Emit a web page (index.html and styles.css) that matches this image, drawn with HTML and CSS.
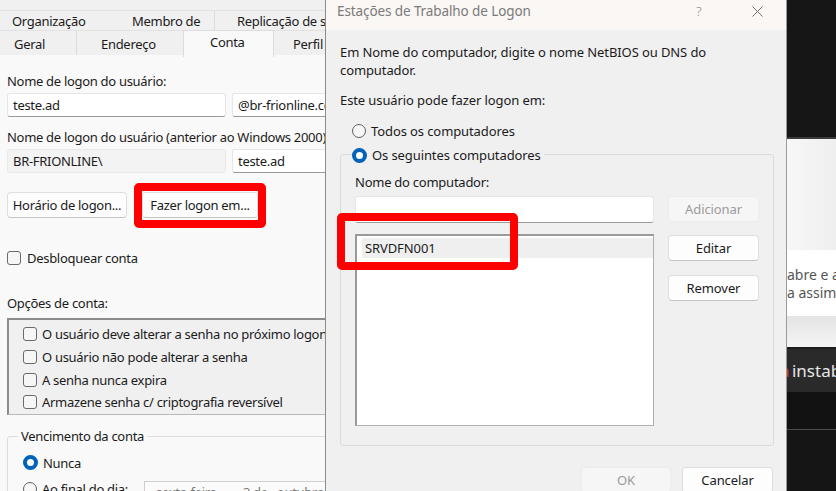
FILE: index.html
```html
<!DOCTYPE html>
<html lang="pt-BR">
<head>
<meta charset="utf-8">
<title>Estações de Trabalho de Logon</title>
<link rel="stylesheet" href="styles.css">
</head>
<body>
<div class="desktop">

  <section class="props">
    <div class="tabs">
      <div class="tab-row row1">
        <div class="tab t-org">Organização</div>
        <div class="tab t-mem">Membro de</div>
        <div class="tab t-rep">Replicação de senha</div>
      </div>
      <div class="tab-row row2">
        <div class="tab t-ger">Geral</div>
        <div class="tab t-end">Endereço</div>
        <div class="tab t-con active">Conta</div>
        <div class="tab t-per">Perfil</div>
      </div>
    </div>
    <div class="page">
      <div class="label l1">Nome de logon do usuário:</div>
      <div class="field-row">
        <div class="input w-main">teste.ad</div>
        <div class="input w-side">@br-frionline.com</div>
      </div>
      <div class="label l2">Nome de logon do usuário (anterior ao Windows 2000):</div>
      <div class="field-row">
        <div class="input w-main disabled">BR-FRIONLINE\</div>
        <div class="input w-side">teste.ad</div>
      </div>
      <div class="btn-row">
        <div class="btn b-hor">Horário de logon...</div>
        <div class="btn b-faz">Fazer logon em...</div>
      </div>
      <div class="check-row unlock"><span class="check"></span>Desbloquear conta</div>
      <div class="label l3">Opções de conta:</div>
      <div class="optlist">
        <div class="opt"><span class="check"></span>O usuário deve alterar a senha no próximo logon</div>
        <div class="opt"><span class="check"></span>O usuário não pode alterar a senha</div>
        <div class="opt"><span class="check"></span>A senha nunca expira</div>
        <div class="opt"><span class="check"></span>Armazene senha c/ criptografia reversível</div>
      </div>
      <div class="expire">
        <div class="expire-legend">Vencimento da conta</div>
        <div class="radio-row r-nunca"><span class="radio on"></span>Nunca</div>
        <div class="radio-row r-final"><span class="radio"></span><span class="rf-label">Ao final do dia:</span>
          <div class="datebox"><span>sexta-feira ,</span><span class="d2">3 de</span><span class="d3">outubro</span></div>
        </div>
      </div>
    </div>
  </section>

  <section class="bgpage">
    <div class="bg-top"></div>
    <div class="bg-card">
      <div class="bg-grad1"></div>
      <div class="bg-text">abre e a<br>a assim</div>
      <div class="bg-grad2"></div>
    </div>
    <div class="bg-bar"><span class="red">a</span> instabilidade</div>
    <div class="bg-dark"></div>
  </section>

  <section class="dialog">
    <header class="titlebar">
      <span class="title">Estações de Trabalho de Logon</span>
      <span class="help">?</span>
      <span class="close"><svg width="11" height="11" viewBox="0 0 11 11"><path d="M0.5 0.5 L10.5 10.5 M10.5 0.5 L0.5 10.5" stroke="#6e6e6e" stroke-width="1" fill="none"/></svg></span>
    </header>
    <div class="dbody">
      <p class="intro">Em Nome do computador, digite o nome NetBIOS ou DNS do<br>computador.</p>
      <p class="dlbl">Este usuário pode fazer logon em:</p>
      <div class="radio-row r-todos"><span class="radio"></span>Todos os computadores</div>
      <div class="group">
        <div class="legend"><span class="radio on"></span>Os seguintes computadores</div>
        <div class="glbl">Nome do computador:</div>
        <div class="grow g1">
          <div class="input name-in"></div>
          <div class="btn dbtn dis">Adicionar</div>
        </div>
        <div class="grow g2">
          <div class="listbox"><div class="item">SRVDFN001</div></div>
          <div class="btn-col">
            <div class="btn dbtn">Editar</div>
            <div class="btn dbtn">Remover</div>
          </div>
        </div>
      </div>
      <div class="foot">
        <div class="btn fbtn dis">OK</div>
        <div class="btn fbtn cancel">Cancelar</div>
      </div>
    </div>
  </section>

  <div class="mark mark1"></div>
  <div class="mark mark2"></div>
</div>
</body>
</html>
```

FILE: styles.css
```css
* { box-sizing: border-box; }
html, body { margin: 0; padding: 0; }
body {
  width: 836px; height: 491px; overflow: hidden;
  font-family: "Noto Sans", "Open Sans", sans-serif;
  font-size: 13px; letter-spacing: -0.1px; color: #1b1b1b; background: #151515;
}
.desktop { position: relative; width: 836px; height: 491px; overflow: hidden; }

/* ---------- left property window ---------- */
.props {
  position: absolute; left: 0; top: 0; width: 420px; height: 491px;
  background: #f0f0f0; letter-spacing: -0.3px;
}
.tabs { padding-top: 10px; }
.tab-row { display: flex; white-space: nowrap; }
.row1 { height: 21px; border-top: 1px solid #e2e2e2; border-bottom: 1px solid #e2e2e2; }
.row2 { height: 24px; }
.tab { border-right: 1px solid #dcdcdc; line-height: 21px; flex: none; }
.row2 .tab { line-height: 22px; padding-top: 2px; }
.t-org { width: 110px; padding-left: 12px; border-right: none; }
.t-mem { width: 105px; padding-left: 22px; }
.t-rep { width: 200px; padding-left: 22px; border-right: none; }
.t-ger { width: 77px; padding-left: 14px; }
.t-end { width: 106px; padding-left: 24px; border-right: none; }
.t-con { width: 91px; padding-left: 26px; }
.t-per { width: 100px; padding-left: 19px; border-right: none; }
.tab.active {
  background: #f9f9f9; border: 1px solid #dcdcdc; border-bottom: none;
  margin-top: -1px; height: 27px; padding-top: 0; position: relative; z-index: 1;
}
.page {
  background: #f9f9f9; height: 436px; padding-left: 7px;
  display: flex; flex-direction: column; align-items: flex-start;
}
.label { line-height: 18px; white-space: nowrap; }
.l1 { margin-top: 17px; }
.l2 { margin-top: 11px; }
.l3 { margin-top: 27px; }
.field-row { display: flex; gap: 6px; margin-top: 3px; }
.input {
  height: 24px; background: #ffffff; border: 1px solid #e6e6e6;
  border-bottom-color: #9a9a9a; border-radius: 3px;
  padding: 0 5px; line-height: 22px; white-space: nowrap; overflow: hidden;
}
.input.disabled { background: #f3f3f3; border-color: #e9e9e9; }
.w-main { width: 219px; }
.w-side { width: 200px; }
.btn-row { display: flex; gap: 15px; margin-top: 19px; }
.btn {
  height: 26px; background: #fdfdfd; border: 1px solid #dedede;
  border-bottom-color: #c4c4c4; border-radius: 4px;
  display: flex; align-items: center; justify-content: center; white-space: nowrap;
}
.b-hor { width: 120px; }
.b-faz { width: 116px; }
.check {
  width: 14px; height: 14px; border: 1px solid #6a6a6a; border-radius: 3px;
  background: #f6f6f6; flex: none;
}
.check-row { display: flex; align-items: center; gap: 6px; height: 18px; white-space: nowrap; }
.unlock { margin-top: 31px; }
.optlist {
  margin-top: 6px; width: 330px; height: 99px; background: #f0f0f0;
  border: 1px solid #b9b9b9; border-top: 2px solid #8c8c8c; border-left: 2px solid #8c8c8c;
  padding-top: 3px;
}
.opt { height: 22.7px; display: flex; align-items: center; gap: 5px; padding-left: 14px; white-space: nowrap; }
.expire {
  margin-top: 21px; width: 400px; height: 120px;
  border: 1px solid #dcdcdc; border-radius: 3px; padding-left: 15px;
  display: flex; flex-direction: column; align-items: flex-start;
}
.expire-legend {
  margin-top: -10px; margin-left: -5px; padding: 0 3px;
  background: #f9f9f9; line-height: 18px; height: 18px; white-space: nowrap;
}
.radio-row { display: flex; align-items: center; gap: 5px; height: 18px; white-space: nowrap; }
.radio {
  width: 14px; height: 14px; border-radius: 50%; border: 1px solid #616161;
  background: #f7f7f7; flex: none;
}
.radio.on { border: 4px solid #0062b8; background: #ffffff; width: 15px; height: 15px; }
.r-nunca { margin-top: 9px; }
.r-final { margin-top: 6px; height: 22px; align-items: center; }
.rf-label { width: 97px; }
.datebox {
  align-self: flex-start; margin-top: 3px;
  height: 26px; width: 260px; border: 1px solid #cfcfcf; border-bottom: none; background: #fbfbfb;
  color: #7a7a7a; display: flex; align-items: flex-start; line-height: 16px; padding: 2px 0 0 11px; white-space: nowrap;
}
.datebox .d2 { margin-left: 20px; }
.datebox .d3 { margin-left: 9px; }

/* ---------- background browser page (right) ---------- */
.bgpage {
  position: absolute; left: 787px; top: 0; width: 49px; height: 491px;
  display: flex; flex-direction: column; overflow: hidden; background: #141414;
  letter-spacing: 0;
}
.bg-top { height: 139px; background: #161616; border-bottom: 2px solid #3b3b3b; flex: none; }
.bg-card { height: 208px; display: flex; flex-direction: column; flex: none; }
.bg-grad1 { height: 111px; background: linear-gradient(90deg, #f7f7f7, #efefef); }
.bg-text {
  height: 66px; background: #ffffff; color: #555; font-size: 14px; line-height: 18px;
  padding-top: 16px; white-space: nowrap;
}
.bg-grad2 { flex: 1; background: linear-gradient(180deg, #e4e4e4, #f5f5f5); }
.bg-bar {
  height: 45px; background: #2a2a2a; border-top: 2px solid #1d1d1d; color: #e6e6e6;
  font-size: 17px; line-height: 44px; white-space: nowrap; margin-left: -7px; word-spacing: -2px; flex: none;
}
.bg-bar .red { color: #d6401c; }
.bg-dark { flex: 1; background: linear-gradient(180deg, #121212 0, #121212 37px, #4a4a4a 37px, #4a4a4a 38px, #151515 38px); }

/* ---------- dialog ---------- */
.dialog {
  position: absolute; left: 325px; top: 0; width: 462px; height: 500px;
  background: #f0f0f0; border-left: 1px solid #8b8b8b; border-right: 1px solid #9a9a9a;
  z-index: 2;
}
.titlebar {
  height: 30px; background: #faf7f4; display: flex; align-items: flex-start;
  padding-top: 2px; color: #7b7b7b; position: relative;
}
.title { padding-left: 11px; line-height: 18px; font-size: 13.5px; }
.help { position: absolute; left: 370px; top: 2px; line-height: 18px; font-size: 13.5px; color: #8a8a8a; font-weight: 300; }
.close { position: absolute; left: 426px; top: 6px; width: 11px; height: 11px; display: block; }
.close svg { display: block; }
.dbody { padding: 0 12px 0 14px; }
.intro { margin: 13px 0 0; line-height: 18px; white-space: nowrap; }
.dlbl { margin: 12px 0 0; line-height: 18px; }
.r-todos { margin-top: 13px; margin-left: 12px; }
.group {
  margin-top: 14px; width: 434px; height: 292px;
  border: 1px solid #dadada; border-radius: 3px; padding: 0 14px;
  display: flex; flex-direction: column; align-items: flex-start;
}
.legend {
  display: flex; align-items: center; gap: 5px; height: 18px;
  margin-top: -9px; margin-left: -3px; padding-right: 3px; background: #f0f0f0;
  white-space: nowrap;
}
.glbl { margin-top: 9px; line-height: 18px; letter-spacing: -0.25px; }
.grow { display: flex; gap: 14px; align-items: flex-start; }
.g1 { margin-top: 5px; }
.g2 { margin-top: 11px; }
.name-in { width: 299px; height: 27px; }
.dbtn { width: 91px; }
.btn.dis { background: #f6f6f6; color: #9b9b9b; border-color: #ececec; }
.listbox {
  width: 299px; height: 192px; background: #ffffff;
  border: 1px solid #b0b0b0; border-top: 2px solid #9a9a9a; border-left: 2px solid #9a9a9a;
  padding: 2px 0 0 5px;
}
.item { height: 20px; background: #efefef; line-height: 20px; padding-left: 3px; }
.btn-col { display: flex; flex-direction: column; gap: 14px; margin-top: 1px; }
.foot { display: flex; justify-content: flex-end; gap: 11px; margin-top: 21px; padding-right: 1px; }
.fbtn { width: 91px; }
.fbtn.dis { width: 90px; }

/* ---------- red annotations ---------- */
.mark { position: absolute; border: 8px solid #ff0000; border-radius: 5px; z-index: 5; }
.mark1 { left: 134px; top: 183px; width: 132px; height: 45px; }
.mark2 { left: 337px; top: 213px; width: 181px; height: 57px; }
```
